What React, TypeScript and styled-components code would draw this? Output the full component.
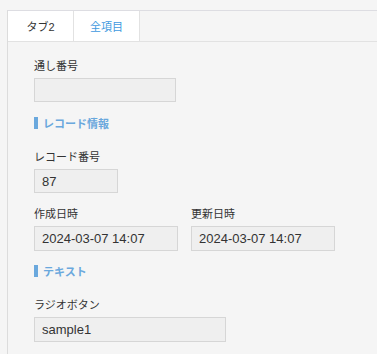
import React from "react";
import styled, { createGlobalStyle } from "styled-components";

const GlobalStyle = createGlobalStyle`
  html, body {
    margin: 0;
    padding: 0;
    background: #f5f5f5;
  }
  body {
    font-family: "Liberation Sans", "Noto Sans CJK JP", sans-serif;
    color: #333;
  }
`;

interface Field {
  label: string;
  value: string;
  width: number;
  height?: number;
}

const recordFields: Field[] = [
  { label: "作成日時", value: "2024-03-07 14:07", width: 144, height: 25 },
  { label: "更新日時", value: "2024-03-07 14:07", width: 144, height: 25 },
];

const FieldBlock = ({ label, value, width, height }: Field) => (
  <FieldWrap>
    <Label>{label}</Label>
    <Input $width={width} $height={height ?? 24}>{value}</Input>
  </FieldWrap>
);

export default function App() {
  return (
    <>
      <GlobalStyle />
      <Page>
        <Panel>
          <TabBar>
            <Tab>タブ2</Tab>
            <Tab $active>全項目</Tab>
          </TabBar>
          <Content>
            <FieldBlock label="通し番号" value="" width={142} />
            <SectionTitle>レコード情報</SectionTitle>
            <FieldBlock label="レコード番号" value="87" width={84} />
            <Row>
              {recordFields.map((f) => (
                <FieldBlock key={f.label} {...f} />
              ))}
            </Row>
            <SectionTitle>テキスト</SectionTitle>
            <FieldBlock label="ラジオボタン" value="sample1" width={192} height={25} />
          </Content>
        </Panel>
      </Page>
    </>
  );
}

const Page = styled.div`
  padding: 10px 0 0 7px;
  min-height: 354px;
  box-sizing: border-box;
`;

const Panel = styled.div`
  border-left: 1px solid #dcdcdc;
  border-top: 1px solid #dddde2;
  min-height: 344px;
  box-sizing: border-box;
`;

const TabBar = styled.div`
  display: flex;
  height: 31px;
  box-sizing: border-box;
  border-bottom: 1px solid #e2e2e2;
`;

const Tab = styled.div<{ $active?: boolean }>`
  width: 66px;
  box-sizing: border-box;
  display: flex;
  align-items: center;
  justify-content: center;
  background: #fff;
  border-right: 1px solid #e2e2e2;
  font-size: 11px;
  color: ${(p) => (p.$active ? "#3f9ae0" : "#333")};
`;

const Content = styled.div`
  padding: 16px 0 12px 26px;
`;

const FieldWrap = styled.div`
  display: flex;
  flex-direction: column;
  margin-bottom: 13px;
`;

const Row = styled.div`
  display: flex;
  gap: 13px;
  margin-bottom: -1px;
`;

const Label = styled.div`
  font-size: 11px;
  line-height: 16px;
  color: #333;
  margin-bottom: 4px;
`;

const Input = styled.div<{ $width: number; $height: number }>`
  width: ${(p) => p.$width}px;
  height: ${(p) => p.$height}px;
  box-sizing: border-box;
  background: #efefef;
  border: 1px solid #d6d6d6;
  padding: 0 7px;
  display: flex;
  align-items: center;
  font-size: 13px;
  color: #333;
`;

const SectionTitle = styled.div`
  display: flex;
  align-items: center;
  height: 16px;
  margin-bottom: 18px;
  font-size: 11px;
  font-weight: bold;
  color: #6aa8dd;

  &::before {
    content: "";
    width: 4px;
    height: 12px;
    background: #6aa8dd;
    margin-right: 5px;
  }
`;
